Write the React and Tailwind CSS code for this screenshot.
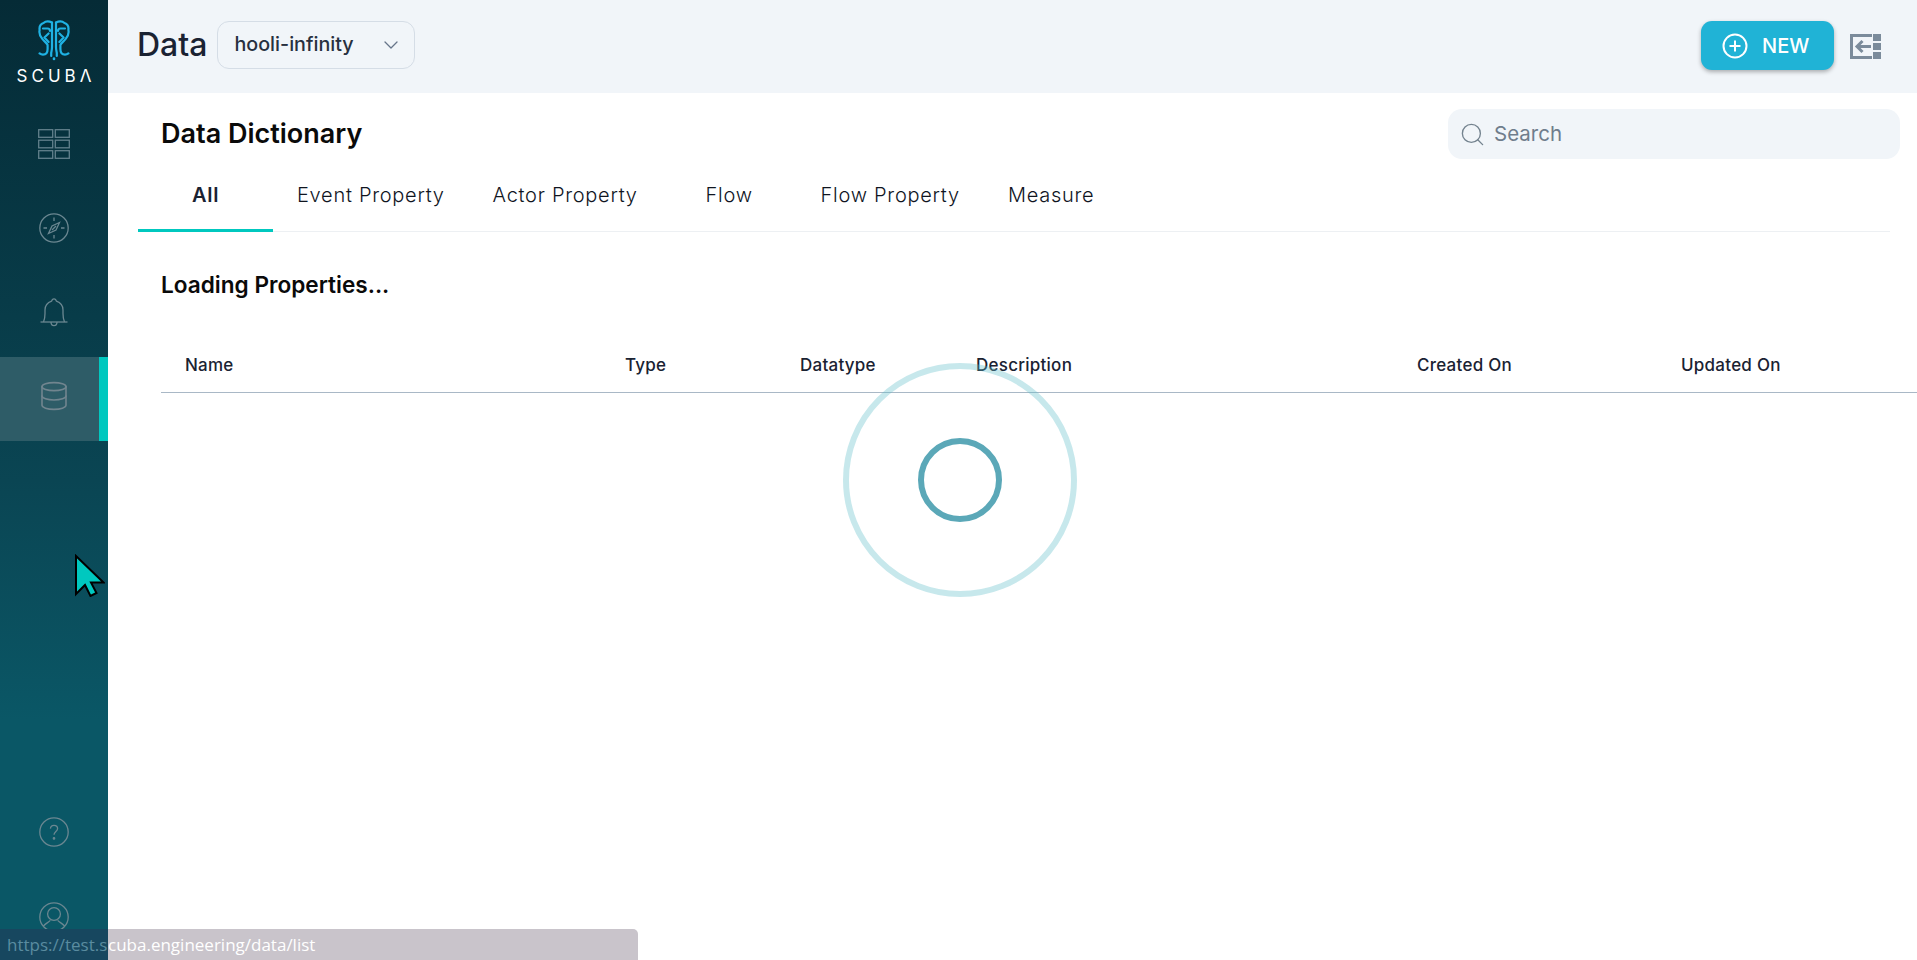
import { ChevronDown, Database, Search } from "lucide-react";

const tabs = ["All", "Event Property", "Actor Property", "Flow", "Flow Property", "Measure"];

const columns = [
  { label: "Name", width: "w-[440px]" },
  { label: "Type", width: "w-[175px]" },
  { label: "Datatype", width: "w-[176px]" },
  { label: "Description", width: "w-[441px]" },
  { label: "Created On", width: "w-[264px]" },
  { label: "Updated On", width: "w-[260px]" },
];

function ScubaLogo() {
  return (
    <svg width="32" height="41" viewBox="0 0 32 41" fill="none" stroke="#1fb2e4" strokeWidth="2.2" strokeLinecap="round" strokeLinejoin="round">
      <path d="M14 2.5C11 1 7.5 1.2 5.5 3 2.5 4 1.2 7 1.6 10 1 13 2 16.5 4.4 19 6 21.4 8.6 22.4 9.6 25V29C9.6 32.4 8 34.6 5 34.6 3.6 34.6 2.6 34.2 1.6 33.4" />
      <path d="M18 2.5C21 1 24.5 1.2 26.5 3 29.5 4 30.8 7 30.4 10 31 13 30 16.5 27.6 19 26 21.4 23.4 22.4 22.4 25V29C22.4 32.4 24 34.6 27 34.6 28.4 34.6 29.4 34.2 30.4 33.4" />
      <path d="M14 2.5V27C14 30 13.4 31.6 13.2 33V36" />
      <path d="M18 2.5V27C18 30 18.6 31.6 18.8 33V36" />
      <path d="M5 8.5H9.5C11.2 8.5 12 9.6 12 11M27 8.5H22.5C20.8 8.5 20 9.6 20 11" />
      <path d="M10.6 13.5L6.4 17.5 10.6 22M21.4 13.5L25.6 17.5 21.4 22" />
      <path d="M16 38.5V39" strokeWidth="2.6" />
    </svg>
  );
}

function GridIcon() {
  return (
    <svg width="32" height="30" viewBox="0 0 32 30" fill="none" stroke="#62808c" strokeWidth="1.3">
      <rect x="0.7" y="0.7" width="14" height="7.6" />
      <rect x="17.3" y="0.7" width="14" height="7.6" />
      <rect x="0.7" y="11.2" width="14" height="7.6" />
      <rect x="17.3" y="11.2" width="14" height="7.6" />
      <rect x="0.7" y="21.7" width="14" height="7.6" />
      <rect x="17.3" y="21.7" width="14" height="7.6" />
    </svg>
  );
}

function CompassIcon() {
  return (
    <svg width="30" height="30" viewBox="0 0 30 30" fill="none" stroke="#6b8791" strokeWidth="1.3">
      <circle cx="15" cy="15" r="14.2" />
      <path d="M15 4.5V8M15 22V25.5M4.5 15H8M22 15H25.5" />
      <path d="M20.5 9.5L17 17 9.5 20.5 13 13Z" />
      <path d="M13 17L17 13" />
    </svg>
  );
}

function BellIcon() {
  return (
    <svg width="28" height="29" viewBox="0 0 28 29" fill="none" stroke="#6b8791" strokeWidth="1.3" strokeLinejoin="round">
      <path d="M0.5 24H27.5" />
      <path d="M3.5 24C4.6 21.6 5 19 5 15.5V12C5 7.5 8.2 4.4 11.6 3.2 12 1.4 13 0.8 14 0.8 15 0.8 16 1.4 16.4 3.2 19.8 4.4 23 7.5 23 12V15.5C23 19 23.4 21.6 24.5 24" />
      <path d="M11 24C11 26.4 12.4 27.6 14 27.6 15.6 27.6 17 26.4 17 24" />
    </svg>
  );
}

function HelpIcon() {
  return (
    <svg width="30" height="30" viewBox="0 0 30 30" fill="none" stroke="#6b8791" strokeWidth="1.3">
      <circle cx="15" cy="15" r="14.2" />
      <path d="M11.4 11.6C11.6 9.4 13.2 8.4 15 8.4 17 8.4 18.6 9.7 18.6 11.6 18.6 14.4 15 14.6 15 17.8" />
      <circle cx="15" cy="21.4" r="0.7" fill="#6b8791" />
    </svg>
  );
}

function UserIcon() {
  return (
    <svg width="30" height="30" viewBox="0 0 30 30" fill="none" stroke="#6b8791" strokeWidth="1.3">
      <circle cx="15" cy="15" r="14.2" />
      <circle cx="15" cy="12" r="6.4" />
      <path d="M4.4 24C7 21.2 9.4 20.4 11.4 18.4M25.6 24C23 21.2 20.6 20.4 18.6 18.4" />
    </svg>
  );
}

function PlusCircle() {
  return (
    <svg width="26" height="26" viewBox="0 0 26 26" fill="none" stroke="#ffffff" strokeWidth="2">
      <circle cx="13" cy="13" r="11.5" />
      <path d="M13 7.5V18.5M7.5 13H18.5" />
    </svg>
  );
}

function PanelIcon() {
  return (
    <svg width="31" height="25" viewBox="0 0 31 25" fill="none" stroke="#7b8b9b" strokeWidth="3">
      <path d="M22 1.5H1.5V23.5H22" />
      <path d="M21 12.5H7M12.5 7L7 12.5 12.5 18" />
      <g fill="#7b8b9b" stroke="none">
        <rect x="23" y="0" width="8" height="7" />
        <rect x="23" y="9" width="8" height="7" />
        <rect x="23" y="18" width="8" height="7" />
      </g>
    </svg>
  );
}

function Cursor() {
  return (
    <svg width="30" height="43" viewBox="0 0 30 43" className="absolute left-[75px] top-[554px]">
      <path d="M1 2V40L10 31 15.5 42 21.5 39 16 28.5H28.5Z" fill="#00c8bf" stroke="#000000" strokeWidth="2" strokeLinejoin="miter" />
    </svg>
  );
}

function NavItem({ active, children }) {
  return (
    <div className={`relative flex h-[84px] items-center justify-center pb-[6px] ${active ? "bg-[#2e5c67]" : ""}`}>
      {children}
      {active && <div className="absolute right-0 top-0 h-full w-[9px] bg-[#00c8bf]" />}
    </div>
  );
}

export default function App() {
  return (
    <div className="relative flex h-screen w-screen overflow-hidden bg-white font-['Inter',sans-serif]">
      <aside className="flex w-[108px] shrink-0 flex-col bg-linear-to-b from-[#052b36] via-[#0a4553] via-50% to-[#0a5766] to-75%">
        <div className="flex h-[105px] flex-col items-center pt-[20px]">
          <ScubaLogo />
          <span className="mt-[5px] pl-[4px] text-[17px] font-normal leading-[20px] tracking-[4px] text-white">SCUBΛ</span>
        </div>
        <NavItem><GridIcon /></NavItem>
        <NavItem><CompassIcon /></NavItem>
        <NavItem><BellIcon /></NavItem>
        <NavItem active><Database size={32} strokeWidth={1.2} color="#71858f" /></NavItem>
        <div className="mt-auto flex flex-col items-center gap-[55px] pb-[28px]">
          <HelpIcon />
          <UserIcon />
        </div>
      </aside>

      <main className="min-w-0 flex-1">
        <header className="flex h-[93px] items-center bg-[#f1f5f9] pb-[4px] pl-[29px] pr-[36px]">
          <h1 className="text-[32px] font-medium leading-none text-[#1a2232]">Data</h1>
          <div className="ml-[10px] flex h-[48px] w-[198px] items-center justify-between rounded-[12px] border border-[#d5dde6] pl-[16px] pr-[11px]">
            <span className="text-[19.7px] font-medium text-[#27303f]">hooli-infinity</span>
            <ChevronDown size={24} strokeWidth={1.3} color="#66758a" />
          </div>
          <button className="ml-auto mt-[2px] flex h-[49px] w-[133px] items-center gap-[14px] rounded-[11px] bg-[#20b3d6] pl-[21px] text-[20px] font-medium text-white shadow-[0_2px_4px_rgba(0,0,0,0.3)]">
            <PlusCircle />
            NEW
          </button>
          <div className="ml-[16px] flex translate-y-[2px]">
            <PanelIcon />
          </div>
        </header>

        <div className="flex items-start justify-between pl-[53px] pr-[17px] pt-[16px]">
          <h2 className="pt-[6px] text-[27px] font-semibold leading-[38px] text-[#0a0a0a]">Data Dictionary</h2>
          <div className="flex h-[50px] w-[452px] items-center gap-[8px] rounded-[14px] bg-[#f1f5f9] pl-[11px]">
            <Search size={27} strokeWidth={1.2} color="#74838f" />
            <span className="text-[20.5px] text-[#6f7d8c]">Search</span>
          </div>
        </div>

        <div className="ml-[30px] mr-[27px] flex border-b border-[#edf0f3]">
          {tabs.map((tab, i) => (
            <div
              key={tab}
              className={`flex h-[72px] min-w-[135px] translate-y-px items-center justify-center border-b-[3px] px-[24px] pt-[1px] text-[20px] tracking-[0.72px] ${
                i === 0 ? "border-[#00c8bf] font-semibold text-[#1a2232]" : "border-transparent font-light text-[#10151f]"
              }`}
            >
              {tab}
            </div>
          ))}
        </div>

        <h3 className="pl-[53px] pt-[38px] text-[22.6px] font-semibold leading-[30px] text-[#0a0a0a]">Loading Properties...</h3>

        <div className="ml-[53px] mt-[48px] flex h-[45px] w-[1756px] items-start border-b-[1.5px] border-[#a9b8c6] pt-[5px]">
          {columns.map((col) => (
            <div key={col.label} className={`${col.width} shrink-0 pl-[24px] text-[17px] font-medium leading-[24px] tracking-[0.25px] text-[#1a2232]`}>
              {col.label}
            </div>
          ))}
        </div>
      </main>

      <div className="absolute inset-0 flex items-center justify-center pl-[3px]">
        <div className="flex h-[234px] w-[234px] items-center justify-center rounded-full border-[6px] border-[#5fbcc8]/35">
          <div className="h-[84px] w-[84px] rounded-full border-[6px] border-[#5ba8b8]" />
        </div>
      </div>

      <Cursor />

      <div className="absolute bottom-0 left-0 flex h-[31px] w-[638px] overflow-hidden rounded-tr-[5px] bg-[#c9c4cb] font-['Open_Sans',sans-serif] text-[17px] leading-[31px] text-white">
        <span className="w-[108px] shrink-0 overflow-hidden whitespace-nowrap bg-[#17475f] pl-[7px] text-[#5a8ca0]">https://test.s</span>
        <span className="whitespace-nowrap">cuba.engineering/data/list</span>
      </div>
    </div>
  );
}
